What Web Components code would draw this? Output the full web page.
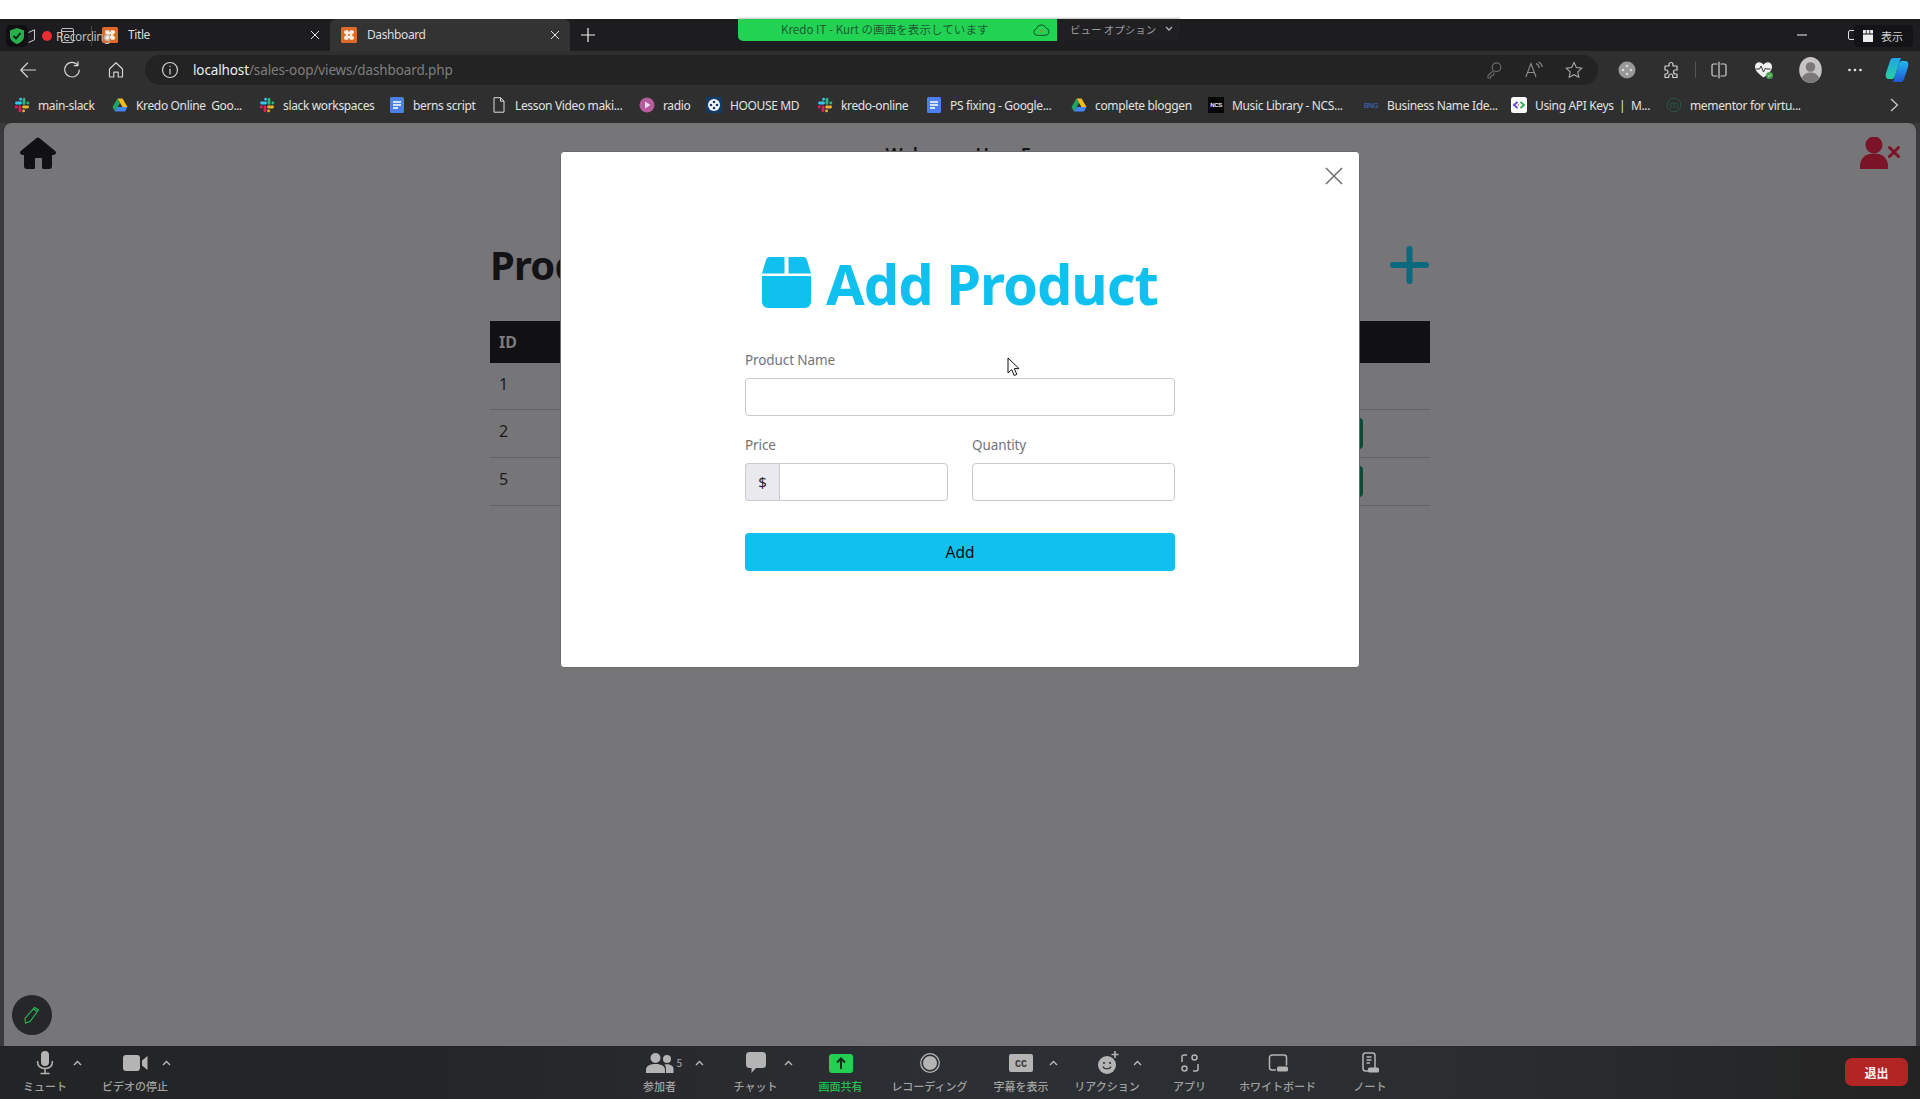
<!DOCTYPE html>
<html>
<head>
<meta charset="utf-8">
<title>Dashboard</title>
<style>
html, body { margin: 0; padding: 0; background: #fff; }
body { font-family: "Noto Sans", "Noto Sans CJK JP", sans-serif; }
</style>
</head>
<body>
<zoom-app></zoom-app>
<script>
const ui = '"Noto Sans", "Noto Sans CJK JP", sans-serif'
const jp = '"Noto Sans CJK JP", "Noto Sans", sans-serif'

// small svg helper, size is the box on screen and view the drawing coordinates
const svg = (w, h, body, view) => `<svg width="${w}" height="${h}" viewBox="${view || `0 0 ${w} ${h}`}" style="display:block;flex:none">${body}</svg>`

const slack = svg(16, 16, `<g fill="none" stroke-width="2.8" stroke-linecap="round">
  <path d="M2.5 6H6.6M6.6 2.2v.1" stroke="#36c5f0"/><path d="M10 2.2v4.2M13.8 6h.1" stroke="#2eb67d"/>
  <path d="M9.6 10h4M9.6 13.8v.1" stroke="#ecb22e"/><path d="M6 9.8v4M2.2 10h.1" stroke="#e01e5a"/></g>`)
const drive = svg(16, 16, `<polygon points="5.5,1.5 10.5,1.5 15.5,10 10.5,10" fill="#f5bb1f"/><polygon points="5.5,1.5 .5,10 3,14.5 8,6" fill="#1fa463"/><polygon points="3,14.5 13,14.5 15.5,10 5.5,10" fill="#4285f4"/>`)
const docs = svg(16, 16, `<rect x="1" y="0" width="14" height="16" rx="1.5" fill="#4a80e8"/><path d="M4 5h8M4 8h8M4 11h5" stroke="#fff" stroke-width="1.4"/>`)
const bookIcons = {
  slack,
  drive,
  docs,
  file: svg(16, 16, `<path d="M3 .7h6.5L13 4.2v11H3zM9.5 .7v3.5H13" fill="none" stroke="#ddd" stroke-width="1"/>`),
  radio: svg(16, 16, `<circle cx="8" cy="8" r="7.5" fill="#b75c9d"/><path d="M6 4.6l5.4 3.4L6 11.4z" fill="#f1dcea"/>`),
  house: svg(16, 16, `<rect width="16" height="16" fill="#143a68"/><circle cx="8" cy="8" r="6" fill="#f2f4f8"/><g fill="#143a68"><circle cx="8" cy="5" r="1.3"/><circle cx="8" cy="11" r="1.3"/><circle cx="5" cy="8" r="1.3"/><circle cx="11" cy="8" r="1.3"/></g>`),
  ncs: svg(16, 16, `<rect width="16" height="16" fill="#050505"/><text x="8" y="10" text-anchor="middle" font-size="6" font-weight="700" fill="#eee" font-family="Liberation Sans">NCS</text>`),
  bng: svg(16, 16, `<text x="8" y="11" text-anchor="middle" font-size="7" fill="#3d6fd0" font-family="Liberation Sans">BNG</text>`),
  api: svg(16, 16, `<rect width="16" height="16" rx="2.5" fill="#fafafa"/><path d="M6.5 4.8L3 8l3.5 3.2" fill="none" stroke="#5a46c8" stroke-width="1.8"/><path d="M9.5 4.8L13 8l-3.5 3.2" fill="none" stroke="#2fa84f" stroke-width="1.8"/><path d="M6.8 8h1" stroke="#e23d3d" stroke-width="1.6"/>`),
  mementor: svg(16, 16, `<circle cx="8" cy="8" r="6.8" fill="none" stroke="#27574a" stroke-width="1"/><path d="M4.8 11V6.2M4.8 7.2c.8-1.6 3-1.6 3.2 0V11M8 7.2c.8-1.6 3.2-1.6 3.2 0V11" fill="none" stroke="#27574a" stroke-width="1"/>`)
}

const xampp = svg(16, 16, `<rect width="16" height="16" rx="1.5" fill="#dd6a2b"/><path d="M5 3.2h1.8L8 5.2l1.2-2H11c1.2 0 2 .8 2 1.8 0 1.4-1.2 2-2.4 3 1.2 1 2.4 1.6 2.4 3 0 1-.8 1.8-2 1.8H9.2L8 10.8l-1.2 2H5c-1.2 0-2-.8-2-1.8 0-1.4 1.2-2 2.4-3C4.2 7 3 6.400 3 5c0-1 .8-1.800 2-1.800z" fill="#fbeee4"/><circle cx="8" cy="8" r="1.1" fill="#dd6a2b"/>`)

const s = 'fill="none" stroke="#d2d2d2" stroke-width="1.2" stroke-linecap="round" stroke-linejoin="round"'
const toolIcons = {
  back: svg(18, 18, `<path d="M16.500 9H1.800M8.500 2L1.800 9l6.700 7" ${s}/>`),
  reload: svg(18, 18, `<path d="M14.800 4.200A7.300 7.300 0 1 0 16.300 9M15 .8v3.800h-3.800" ${s}/>`),
  home: svg(18, 18, `<path d="M2.500 8L9 1.800 15.500 8v8h-4.300v-4.800H6.800V16H2.500z" ${s}/>`),
  info: svg(18, 18, `<circle cx="9" cy="9" r="7.500" ${s}/><path d="M9 8v5M9 5.200v.3" ${s}/>`),
  key: svg(18, 18, `<circle cx="11.500" cy="6.200" r="4.300" fill="none" stroke="#6d6d6d" stroke-width="1.100"/><path d="M8.500 9.300L3 14.500V17h2.500l.4-2 2-.5 1.500-3" fill="none" stroke="#6d6d6d" stroke-width="1.100"/>`),
  read: svg(20, 18, `<path d="M1.800 16L7 2.500 12 16M3.500 11.500h7" fill="none" stroke="#8d8d8d" stroke-width="1.100"/><path d="M12 2.500c2 .8 3 2.500 3.300 4.500M14.500 1c2.300 1 3.500 3 3.800 5" fill="none" stroke="#8d8d8d" stroke-width="1.100"/>`),
  star: svg(18, 18, `<path d="M9 1.500l2.400 5 5.400.7-4 3.700 1 5.400L9 13.700l-4.800 2.600 1-5.400-4-3.700 5.400-.7z" fill="none" stroke="#a8a8a8" stroke-width="1.100"/>`),
  dots: svg(18, 18, `<circle cx="9" cy="9" r="8.500" fill="#989898"/><g fill="#d9d9d9"><circle cx="9" cy="5" r="1.300"/><circle cx="5" cy="9" r="1.300"/><circle cx="13" cy="9" r="1.300"/><circle cx="9" cy="13" r="1.300"/></g>`),
  puzzle: svg(18, 18, `<path d="M7 3.500a2 2 0 1 1 4 0V5h4v4h-1.500a2 2 0 1 0 0 4H15v3.500h-4.200V15a2 2 0 1 0-4 0v1.500H3V13h1a2 2 0 1 0 0-4H3V5h4z" ${s}/>`),
  split: svg(18, 18, `<path d="M7 3H3.500A1.500 1.500 0 0 0 2 4.500v9A1.500 1.500 0 0 0 3.500 15H7M11 3h3.500A1.500 1.500 0 0 1 16 4.500v9a1.500 1.500 0 0 1-1.500 1.500H11M9 1v16" ${s}/>`),
  heart: svg(20, 20, `<path d="M9.500 17.500C4 13.500 1 10.500 1 6.800 1 4 3 2.300 5.200 2.300c1.800 0 3.300.9 4.300 2.500 1-1.600 2.500-2.500 4.300-2.500C16 2.300 18 4 18 6.800c0 3.700-3 6.700-8.500 10.700z" fill="#f1f1f1"/><path d="M1.500 9h4l1.500-3 2.500 6 2-4 1 1h4" fill="none" stroke="#333" stroke-width="1"/><circle cx="15.500" cy="15.500" r="3.500" fill="#46a14a"/><path d="M13.800 15.500l1.200 1.200 2-2.200" fill="none" stroke="#dff3df" stroke-width=".9"/>`),
  avatar: svg(23, 26, `<ellipse cx="11.500" cy="13" rx="11.300" ry="13" fill="#c6c4c4"/><circle cx="11.500" cy="10" r="4.800" fill="#7a7878"/><path d="M3 21c1.500-4 5-5.500 8.500-5.500S18.500 17 20 21c-2 3-5 5-8.500 5S5 24 3 21z" fill="#7a7878"/>`),
  more: svg(16, 4, `<g fill="#e8e8e8"><circle cx="2.500" cy="2" r="1.300"/><circle cx="8" cy="2" r="1.300"/><circle cx="13.500" cy="2" r="1.300"/></g>`),
  copilot: svg(24, 26, `<defs><linearGradient id="cp1" x1="0" y1="0" x2="0" y2="1"><stop offset="0" stop-color="#1fa5e8"/><stop offset="1" stop-color="#27d0a0"/></linearGradient><linearGradient id="cp2" x1="0" y1="0" x2="0" y2="1"><stop offset="0" stop-color="#22b8f0"/><stop offset="1" stop-color="#2057d8"/></linearGradient></defs><path d="M8 1h8l-1 3-5 15c-1 3-3 3.500-5 3H3c-2-.5-3-3-2-6L5 4c.5-2 2-3 3-3z" fill="url(#cp1)"/><path d="M16 25H8l1-3 5-15c1-3 3-3.500 5-3h2c2 .5 3 3 2 6l-4 12c-.5 2-2 3-3 3z" fill="url(#cp2)"/>`)
}

const g = '#b4b4b4'
const meetIcons = {
  mic: svg(20, 24, `<rect x="6" y="0" width="8" height="15" rx="4" fill="${g}"/><path d="M2.500 10c0 5 3 7.500 7.500 7.500s7.500-2.500 7.500-7.500M10 17.500V22M5.500 22.500h9" fill="none" stroke="${g}" stroke-width="1.500"/>`),
  video: svg(25, 16, `<rect x="0" y="0" width="17" height="16" rx="3" fill="${g}"/><path d="M19 5.500L24.500 1v14L19 10.500z" fill="${g}"/>`),
  people: svg(28, 20, `<circle cx="9.500" cy="5" r="5" fill="${g}"/><path d="M0 20v-3c0-3.500 3-6 9.500-6s9.500 2.500 9.500 6v3z" fill="${g}"/><circle cx="21" cy="6" r="4" fill="${g}"/><path d="M20 20v-4c0-2-.5-3-1.500-4.500 4-.8 9 .5 9 4.500v4z" fill="${g}"/>`),
  chat: svg(20, 22, `<path d="M3.500 0h13A3.500 3.500 0 0 1 20 3.500v9a3.500 3.500 0 0 1-3.500 3.500H10l-4.500 5v-5h-2A3.500 3.500 0 0 1 0 12.500v-9A3.500 3.500 0 0 1 3.500 0z" fill="${g}"/>`),
  share: svg(24, 19, `<rect width="24" height="19" rx="3" fill="#22d052"/><path d="M12 15V5M8 8.500L12 4.500l4 4" fill="none" stroke="#0b2f17" stroke-width="2"/>`),
  rec: svg(20, 20, `<circle cx="10" cy="10" r="9.300" fill="none" stroke="${g}" stroke-width="1.300"/><circle cx="10" cy="10" r="7" fill="${g}"/>`),
  cc: svg(24, 18, `<rect width="24" height="18" rx="2" fill="${g}"/><text x="12" y="13" text-anchor="middle" font-size="10" font-weight="700" fill="#333" font-family="Liberation Mono">CC</text>`),
  react: svg(24, 24, `<circle cx="12" cy="14" r="9" fill="${g}"/><circle cx="9" cy="12" r="1.100" fill="#333"/><circle cx="15" cy="12" r="1.100" fill="#333"/><path d="M8 15.500c1 3 7 3 8 0" fill="none" stroke="#333" stroke-width="1.200"/><path d="M20 0v7M16.500 3.500h7" stroke="${g}" stroke-width="1.600"/>`),
  apps: svg(20, 20, `<path d="M7 2H4a2 2 0 0 0-2 2v5M13 18h3a2 2 0 0 0 2-2v-5" fill="none" stroke="${g}" stroke-width="1.500"/><circle cx="14.500" cy="4.500" r="2.500" fill="none" stroke="${g}" stroke-width="1.500"/><circle cx="4.500" cy="15.500" r="2.500" fill="none" stroke="${g}" stroke-width="1.500"/>`),
  board: svg(20, 20, `<path d="M8 17H4a2.500 2.500 0 0 1-2.500-2.500v-10A2.500 2.500 0 0 1 4 2h12a2.500 2.500 0 0 1 2.500 2.500v8" fill="none" stroke="${g}" stroke-width="1.500"/><rect x="9" y="13.500" width="11" height="5" rx="1.500" fill="${g}"/>`),
  note: svg(20, 22, `<rect x="3" y="1" width="12" height="18" rx="2.500" fill="none" stroke="${g}" stroke-width="1.500"/><path d="M6.500 5h5M6.500 8h5M6.500 11h3.500" stroke="${g}" stroke-width="1.300"/><rect x="8" y="15.500" width="11" height="5" rx="1.500" fill="${g}"/>`)
}

const caret = (color) => svg(9, 6, `<path d="M1 5l3.500-3.500L8 5" fill="none" stroke="${color}" stroke-width="1.400"/>`)

class BrowserTab extends HTMLElement {
  connectedCallback () {
    this.attachShadow({ mode: 'open' }).innerHTML = `
    <style>
      :host { display: flex; align-items: center; width: 240px; height: 32px; box-sizing: border-box; padding: 0 10px 0 12px; color: #dcdcdc; font: 12px ${ui}; letter-spacing: -.4px; }
      :host([active]) { background: #333334; border-radius: 6px 6px 0 0; padding-left: 11px; }
      .title { flex: 1; margin: -2px 0 0 10px; }
    </style>
    ${xampp}<span class="title"><slot></slot></span>
    ${svg(10, 10, '<path d="M1 1l8 8M9 1L1 9" stroke="#e6e6e6" stroke-width="1"/>')}`
  }
}
customElements.define('browser-tab', BrowserTab)

class ToolBtn extends HTMLElement {
  connectedCallback () {
    this.attachShadow({ mode: 'open' }).innerHTML = `
    <style>:host { display: flex; align-items: center; justify-content: center; flex: none; height: 30px; width: ${this.getAttribute('w') || 44}px; }</style>
    ${toolIcons[this.getAttribute('icon')]}`
  }
}
customElements.define('tool-btn', ToolBtn)

class BookMark extends HTMLElement {
  connectedCallback () {
    this.attachShadow({ mode: 'open' }).innerHTML = `
    <style>
      :host { display: flex; align-items: center; flex: none; gap: 8px; margin-right: ${this.getAttribute('m') || 17}px; color: #e2e2e2; font: 12px ${ui}; white-space: pre; letter-spacing: -.35px; }
      .t { width: ${this.getAttribute('w')}px; }
    </style>
    ${bookIcons[this.getAttribute('icon')]}<span class="t"><slot></slot></span>`
  }
}
customElements.define('book-mark', BookMark)

class BrowserChrome extends HTMLElement {
  connectedCallback () {
    this.attachShadow({ mode: 'open' }).innerHTML = `
    <style>
      :host { display: block; background: #2f2f30; }
      .tabs { display: flex; align-items: center; height: 32px; background: #1d1d1f; padding-left: 90px; }
      .plus { margin-left: 11px; }
      .win { margin-left: auto; display: flex; align-items: center; padding-right: 64px; gap: 41px; }
      .toolbar { display: flex; align-items: flex-start; height: 30px; padding: 4px 3px 0 6px; }
      .pill { flex: 1; display: flex; align-items: center; height: 30px; margin: 0 7px; background: #232324; border-radius: 15px; padding: 0 4px 0 16px; }
      .url { margin-left: 14px; flex: 1; font: 13.5px ${ui}; letter-spacing: -.12px; color: #7e7e7e; white-space: nowrap; }
      .url b { font-weight: 400; color: #ededed; }
      .sep { width: 1px; height: 16px; background: #555; margin: 7px 1px 0 2px; flex: none; }
      .marks { display: flex; align-items: center; height: 36px; padding: 2px 0 0 14px; }
      .next { margin-left: auto; margin-right: 21px; }
    </style>
    <div class="tabs">
      <browser-tab>Title</browser-tab>
      <browser-tab active>Dashboard</browser-tab>
      <span class="plus">${svg(14, 14, '<path d="M7 0v14M0 7h14" stroke="#f0f0f0" stroke-width="1.200"/>')}</span>
      <div class="win">
        ${svg(10, 2, '<path d="M0 1h10" stroke="#eee" stroke-width="1"/>')}
        ${svg(8, 10, '<rect x=".5" y=".5" width="7" height="9" rx="1.500" fill="none" stroke="#ddd" stroke-width="1"/>')}
      </div>
    </div>
    <div class="toolbar">
      <tool-btn icon="back"></tool-btn><tool-btn icon="reload"></tool-btn><tool-btn icon="home"></tool-btn>
      <div class="pill">
        ${toolIcons.info}
        <span class="url"><b>localhost</b>/sales-oop/views/dashboard.php</span>
        <tool-btn icon="key" w="40"></tool-btn><tool-btn icon="read" w="40"></tool-btn><tool-btn icon="star" w="40"></tool-btn>
      </div>
      <tool-btn icon="dots"></tool-btn><tool-btn icon="puzzle"></tool-btn><span class="sep"></span>
      <tool-btn icon="split"></tool-btn><tool-btn icon="heart" w="46"></tool-btn><tool-btn icon="avatar" w="46"></tool-btn>
      <tool-btn icon="more"></tool-btn><tool-btn icon="copilot" w="40"></tool-btn>
    </div>
    <div class="marks">
      <book-mark icon="slack" w="57">main-slack</book-mark>
      <book-mark icon="drive" w="106">Kredo Online  Goo...</book-mark>
      <book-mark icon="slack" w="89">slack workspaces</book-mark>
      <book-mark icon="docs" w="63" m="15">berns script</book-mark>
      <book-mark icon="file" w="107">Lesson Video maki...</book-mark>
      <book-mark icon="radio" w="26">radio</book-mark>
      <book-mark icon="house" w="70">HOOUSE MD</book-mark>
      <book-mark icon="slack" w="68">kredo-online</book-mark>
      <book-mark icon="docs" w="104">PS fixing - Google...</book-mark>
      <book-mark icon="drive" w="99" m="14">complete bloggen</book-mark>
      <book-mark icon="ncs" w="114">Music Library - NCS...</book-mark>
      <book-mark icon="bng" w="107">Business Name Ide...</book-mark>
      <book-mark icon="api" w="114">Using API Keys  |  M...</book-mark>
      <book-mark icon="mementor" w="108">mementor for virtu...</book-mark>
      <span class="next">${svg(9, 14, '<path d="M1 1l6.500 6L1 13" fill="none" stroke="#cfcfcf" stroke-width="1.200"/>')}</span>
    </div>`
  }
}
customElements.define('browser-chrome', BrowserChrome)

// recording badge of the screen recorder, lies over the first tab
class RecBadge extends HTMLElement {
  connectedCallback () {
    this.attachShadow({ mode: 'open' }).innerHTML = `
    <style>
      :host { position: absolute; left: 6px; top: 25px; height: 22px; display: flex; align-items: center; font: 12px ${ui}; color: #bdbdbd; }
      .shield { width: 22px; height: 22px; background: #101012; border-radius: 5px; display: flex; align-items: center; justify-content: center; }
      .dot { width: 10px; height: 10px; border-radius: 50%; background: #ee2b33; margin: 0 4px 0 7px; }
      .txt { letter-spacing: -.3px; }
      .over { position: absolute; left: 55px; top: 3px; }
      .line { position: absolute; left: 85px; top: 1px; width: 1px; height: 20px; background: #444; }
    </style>
    <span class="shield">${svg(14, 16, '<path d="M7 0l7 2.500V8c0 4-3 6.500-7 8-4-1.500-7-4-7-8V2.500z" fill="#27b04b"/><path d="M3.500 8l2.500 2.500L10.500 5" fill="none" stroke="#0c1c10" stroke-width="1.800"/>')}</span>
    ${svg(7, 14, '<path d="M.5 3.500L6.500.8v10L.5 13.500" fill="none" stroke="#cfcfcf" stroke-width="1"/>')}
    <span class="dot"></span><span class="txt">Recording</span>
    <span class="over">${svg(13, 15, '<rect x=".5" y=".5" width="12" height="14" rx="1.500" fill="none" stroke="#bdbdbd" stroke-width="1"/><path d="M.5 3.500h12" stroke="#bdbdbd"/>')}</span>
    <span class="line"></span>`
  }
}
customElements.define('rec-badge', RecBadge)

class ShareBanner extends HTMLElement {
  connectedCallback () {
    this.attachShadow({ mode: 'open' }).innerHTML = `
    <style>
      :host { position: absolute; left: 738px; top: 19px; width: 442px; height: 22px; display: flex; font: 11.6px ${jp}; box-shadow: 0 -1px 2px rgba(0,0,0,.25); border-radius: 0 0 5px 5px; overflow: hidden; }
      .green { width: 319px; background: #22d353; color: #1c5b33; display: flex; align-items: center; justify-content: space-between; padding: 0 7px 2px 43px; box-sizing: border-box; }
      .opts { flex: 1; background: #202022; color: #9a9a9a; display: flex; align-items: center; padding: 0 0 2px 13px; gap: 9px; font-size: 10.5px; }
    </style>
    <div class="green"><span>Kredo IT - Kurt の画面を表示しています</span>
    ${svg(17, 13, '<path d="M4 12.300a3.300 3.300 0 0 1-.6-6.500 5 5 0 0 1 9.600-.6A3.600 3.600 0 0 1 13 12.300z" fill="none" stroke="#14502a" stroke-width="1"/><circle cx="8.500" cy="8" r="1.600" fill="#7f9a3a"/>')}</div>
    <div class="opts"><span>ビュー オプション</span>${svg(8, 6, '<path d="M1 1l3 3 3-3" fill="none" stroke="#b5b5b5" stroke-width="1.300"/>')}</div>`
  }
}
customElements.define('share-banner', ShareBanner)

// the toolbar tile "表示" lies over the window close button
class ViewTile extends HTMLElement {
  connectedCallback () {
    this.attachShadow({ mode: 'open' }).innerHTML = `
    <style>
      :host { position: absolute; left: 1854px; top: 25px; width: 59px; height: 22px; box-sizing: border-box; padding-left: 9px; gap: 8px; display: flex; align-items: center; background: #141416; border-radius: 4px; color: #cfcfcf; font: 11px ${jp}; }
    </style>
    ${svg(10, 12, '<path d="M0 3.500V0h2.800v3.500zM3.600 3.500V0h2.800v3.500zM7.200 3.500V0H10v3.500z" fill="#eee"/><rect y="4.500" width="10" height="7.500" fill="#eee"/>')}
    <span>表示</span>`
  }
}
customElements.define('view-tile', ViewTile)

class DashPage extends HTMLElement {
  connectedCallback () {
    this.attachShadow({ mode: 'open' }).innerHTML = `
    <style>
      :host { display: block; position: relative; flex: 1; margin: 0 4px; background: #767578; border-radius: 8px 8px 0 0; overflow: hidden; color: #131316; font-family: ${ui}; }
      .nav { display: flex; justify-content: space-between; align-items: flex-start; padding: 14px 16px 0; height: 32px; }
      .hello { font-size: 18px; font-weight: 600; line-height: 32px; margin: 1px 0 0 0; }
      .wrap { width: 940px; margin: 70px auto 0; }
      .head { display: flex; justify-content: space-between; align-items: center; height: 52px; margin-right: 1px; }
      h1 { margin: 0; font-size: 40px; font-weight: 700; line-height: 52px; letter-spacing: -.8px; }
      .row { display: flex; justify-content: space-between; align-items: center; box-sizing: border-box; height: 48px; padding: 0 67px 5px 9px; border-bottom: 1px solid #646367; font-size: 16px; color: #1c1b1f; }
      .row.first { height: 47px; }
      .th { height: 42px; background: #111114; color: #7b7a7d; font-weight: 700; border: 0; margin-top: 30px; padding-bottom: 0; }
      .edit { width: 60px; height: 31px; background: #0c4a35; border-radius: 4px; margin-bottom: -5px; }
    </style>
    <div class="nav">
      ${svg(36, 32, '<path d="M18 .5a2 2 0 0 1 1.400.5L35.200 14a2.300 2.300 0 0 1-1.500 4H32v11a3 3 0 0 1-3 3h-5.500a1.500 1.500 0 0 1-1.500-1.500V22a1 1 0 0 0-1-1h-5a1 1 0 0 0-1 1v8.500a1.500 1.500 0 0 1-1.500 1.500H7a3 3 0 0 1-3-3V18H2.300a2.300 2.300 0 0 1-1.500-4L16.600 1a2 2 0 0 1 1.400-.5z" fill="#111114"/>')}
      <div class="hello">Welcome, User F</div>
      ${svg(40, 32, '<circle cx="14" cy="8" r="8.500" fill="#7b1426"/><path d="M0 32v-3c0-8 6-12.500 14-12.500S28 21 28 29v3z" fill="#7b1426"/><path d="M29.500 10.500l9 9M38.500 10.500l-9 9" stroke="#7b1426" stroke-width="3" stroke-linecap="round"/>')}
    </div>
    <div class="wrap">
      <div class="head"><h1>Products</h1>
        ${svg(39, 38, '<path d="M19.500 3v32M3 19h33" stroke="#0a697f" stroke-width="6" stroke-linecap="round"/>')}
      </div>
      <div class="row th"><span>ID</span></div>
      <div class="row first"><span>1</span></div>
      <div class="row"><span>2</span><span class="edit"></span></div>
      <div class="row"><span>5</span><span class="edit"></span></div>
    </div>
    <slot></slot>`
  }
}
customElements.define('dash-page', DashPage)

class AddProductModal extends HTMLElement {
  connectedCallback () {
    this.attachShadow({ mode: 'open' }).innerHTML = `
    <style>
      :host { position: absolute; inset: 0; display: flex; justify-content: center; align-items: flex-start; padding-top: 28px; font-family: ${ui}; }
      .box { position: relative; box-sizing: border-box; width: 800px; height: 517px; background: #fff; border: 1px solid #6a6a6d; border-radius: 4px; }
      .x { position: absolute; right: 16px; top: 15px; }
      h2 { display: flex; justify-content: center; align-items: flex-start; gap: 15px; margin: 0; padding-top: 105px; height: 62px; color: #10c1f0; font-size: 56px; font-weight: 700; line-height: 52px; letter-spacing: -1px; }
      form { width: 430px; margin: 31px auto 0; display: grid; grid-template-columns: 203px 203px; column-gap: 24px; }
      .full { grid-column: 1 / -1; }
      label { display: block; font-size: 13.5px; line-height: 20px; color: #727379; margin-bottom: 8px; letter-spacing: -.1px; }
      input { display: block; box-sizing: border-box; width: 100%; height: 38px; border: 1px solid #c9c9d1; border-radius: 4px; background: #fff; margin: 0; padding: 0 12px; }
      .group { display: flex; }
      .group span { flex: none; box-sizing: border-box; width: 34px; height: 38px; border: 1px solid #c9c9d1; border-right: 0; border-radius: 4px 0 0 4px; background: #e9e9ee; color: #212529; display: flex; align-items: center; justify-content: center; font-size: 15px; }
      .group input { border-radius: 0 4px 4px 0; min-width: 0; flex: 1; }
      .mid { margin-top: 19px; }
      button { grid-column: 1 / -1; height: 38px; margin-top: 32px; border: 0; border-radius: 4px; background: #10c1f0; color: #0b0b0d; font: 15.5px ${ui}; }
    </style>
    <div class="box">
      <span class="x">${svg(18, 18, '<path d="M1 1l16 16M17 1L1 17" stroke="#6c6c70" stroke-width="1.500"/>')}</span>
      <h2>${svg(49, 51, '<path d="M7 0h15.500v16.500H0L4 3a4 4 0 0 1 3-3zM26.500 0H42a4 4 0 0 1 3 3l4 13.500H26.500zM0 19h49v26a6 6 0 0 1-6 6H6a6 6 0 0 1-6-6z" fill="#10c1f0"/>')}<span>Add Product</span></h2>
      <form>
        <div class="full"><label>Product Name</label><input type="text"></div>
        <div class="mid"><label>Price</label><div class="group"><span>$</span><input type="number"></div></div>
        <div class="mid"><label>Quantity</label><input type="number"></div>
        <button type="button">Add</button>
      </form>
    </div>`
  }
}
customElements.define('add-product-modal', AddProductModal)

class MeetBtn extends HTMLElement {
  connectedCallback () {
    const off = this.getAttribute('caret')
    const count = this.getAttribute('count')
    this.attachShadow({ mode: 'open' }).innerHTML = `
    <style>
      :host { position: relative; display: flex; flex-direction: column; align-items: center; flex: none; width: ${this.getAttribute('w')}px; padding-top: 5px; color: #a2a2a2; font: 500 11px ${jp}; }
      :host([on]) { color: #22c04e; }
      .ic { height: 24px; display: flex; align-items: center; }
      .lb { margin-top: 3px; line-height: 16px; white-space: nowrap; }
      .caret { position: absolute; top: 14px; left: calc(50% + ${off}px - 4.5px); }
      .count { position: absolute; top: 9px; left: calc(50% + 17px); font-size: 10px; color: #9a9a9a; }
    </style>
    <span class="ic">${meetIcons[this.getAttribute('icon')]}</span>
    <span class="lb"><slot></slot></span>
    ${off ? `<span class="caret">${caret('#b8b8b8')}</span>` : ''}
    ${count ? `<span class="count">${count}</span>` : ''}`
  }
}
customElements.define('meet-btn', MeetBtn)

class MeetingBar extends HTMLElement {
  connectedCallback () {
    this.attachShadow({ mode: 'open' }).innerHTML = `
    <style>
      :host { display: flex; flex: none; height: 53px; background: linear-gradient(90deg, #232425 0%, #25262a 25%, #2c2f33 50%, #2b2e31 75%, #232323 100%); }
      .mid { margin-left: 435px; display: flex; }
      .leave { margin: 12px 12px 0 auto; width: 63px; height: 28px; border-radius: 7px; background: #b32525; color: #f5f0f0; display: flex; align-items: center; justify-content: center; font: 700 12px ${jp}; }
    </style>
    <meet-btn icon="mic" w="90" caret="32">ミュート</meet-btn>
    <meet-btn icon="video" w="90" caret="31">ビデオの停止</meet-btn>
    <div class="mid">
      <meet-btn icon="people" w="89" caret="39.500" count="5">参加者</meet-btn>
      <meet-btn icon="chat" w="103" caret="32.500">チャット</meet-btn>
      <meet-btn icon="share" w="67" on>画面共有</meet-btn>
      <meet-btn icon="rec" w="111">レコーディング</meet-btn>
      <meet-btn icon="cc" w="72" caret="32">字幕を表示</meet-btn>
      <meet-btn icon="react" w="100" caret="30">リアクション</meet-btn>
      <meet-btn icon="apps" w="65">アプリ</meet-btn>
      <meet-btn icon="board" w="111">ホワイトボード</meet-btn>
      <meet-btn icon="note" w="74">ノート</meet-btn>
    </div>
    <div class="leave">退出</div>`
  }
}
customElements.define('meeting-bar', MeetingBar)

// annotate button and mouse pointer sit on top of the shared screen
class PencilBtn extends HTMLElement {
  connectedCallback () {
    this.attachShadow({ mode: 'open' }).innerHTML = `
    <style>:host { position: absolute; left: 12px; top: 995px; width: 40px; height: 40px; border-radius: 50%; background: #25272a; display: flex; align-items: center; justify-content: center; }</style>
    ${svg(16, 18, '<path d="M1.500 17l-.5-4.500L10.500 1.500l4 2.500-8.500 11.500zM9.500 3l4 2.800" fill="none" stroke="#22c04e" stroke-width="1.100"/>')}`
  }
}
customElements.define('pencil-btn', PencilBtn)

class MouseCursor extends HTMLElement {
  connectedCallback () {
    this.attachShadow({ mode: 'open' }).innerHTML = `
    <style>:host { position: absolute; left: 1007px; top: 357px; }</style>
    ${svg(13, 20, '<path d="M1 1v15l3.700-3.400 2.500 5.900 2.600-1.100-2.500-5.800H12z" fill="#fff" stroke="#111" stroke-width="1"/>')}`
  }
}
customElements.define('mouse-cursor', MouseCursor)

class ZoomApp extends HTMLElement {
  connectedCallback () {
    this.attachShadow({ mode: 'open' }).innerHTML = `
    <style>
      :host { display: flex; flex-direction: column; position: relative; width: 1920px; height: 1099px; overflow: hidden; background: #3a393c; }
      .top { height: 19px; flex: none; background: #fff; }
      browser-chrome { flex: none; }
    </style>
    <div class="top"></div>
    <browser-chrome></browser-chrome>
    <dash-page><add-product-modal></add-product-modal></dash-page>
    <meeting-bar></meeting-bar>
    <rec-badge></rec-badge>
    <share-banner></share-banner>
    <view-tile></view-tile>
    <pencil-btn></pencil-btn>
    <mouse-cursor></mouse-cursor>`
  }
}
customElements.define('zoom-app', ZoomApp)
</script>
</body>
</html>
